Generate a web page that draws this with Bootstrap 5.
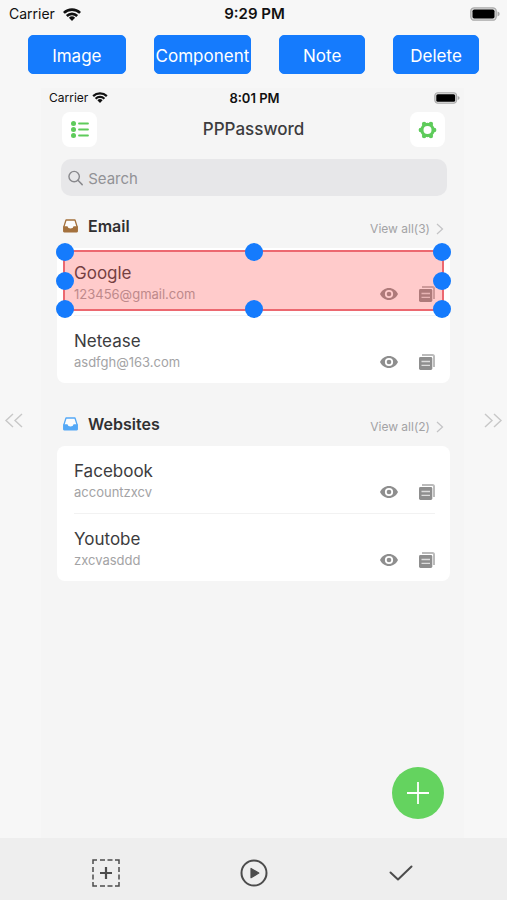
<!DOCTYPE html>
<html lang="en">
<head>
<meta charset="utf-8">
<meta name="viewport" content="width=device-width, initial-scale=1">
<title>PPPassword prototype editor</title>
<link href="https://cdn.jsdelivr.net/npm/bootstrap@5.3.0/dist/css/bootstrap.min.css" rel="stylesheet">
<style>
body { font-family: Inter, "Liberation Sans", sans-serif; background: #f7f7f7; color: #3c3c3e; line-height: 20px; font-size: 16px; }
svg { display: block; }
button { color: inherit; }
.status { height: 28px; color: #111; font-size: 14px; padding: 0 7px 0 9px; }
.status-small { height: 19px; font-size: 12px; padding: 0 4px 0 8px; }
.time { font-weight: 600; font-size: 15px; }
.status-small .time { font-size: 13px; }
.tools { gap: 28px; padding: 7px 28px 14px; }
.tool { --bs-btn-bg: #157bfd; --bs-btn-border-color: #157bfd; height: 39px; font-size: 17px; border-radius: 5px; flex: 86 1 0; }
.tool-wide { flex-grow: 98; }
.pager { width: 41px; padding: 0 0 86px; }
.pager-next { width: 43px; }
.screen { background: #f5f5f5; }
.head { padding: 5px 19px 0 21px; }
.square { width: 35px; height: 35px; border-radius: 8px; background: #fff; color: #5ecb5b; }
.app-title { font-size: 17px; font-weight: 500; }
.content { padding: 12px 14px 0 16px; }
.search { margin: 0 3px 0 4px; height: 37px; border-radius: 10px; background: #e7e7e9; padding: 0 7px; gap: 5px; }
.search input { font-size: 15px; color: #3c3c3e; }
.search input::placeholder { color: #929296; }
.section-head { height: 63px; padding: 18px 6px 0 6px; }
.section-head.first { height: 52px; padding-top: 8px; }
.section-head h2 { font-size: 16px; line-height: 20px; font-weight: 600; color: #303032; margin: 0 0 0 10px; }
.view-all { font-size: 12px; color: #a3a3a5; padding-top: 6px; gap: 6px; }
.group { border-radius: 8px; background: #fff; padding: 0 15px 0 17px; }
.entry { height: 67px; padding-top: 15px; }
.entry + .entry { border-top: 1px solid #f2f2f2; height: 68px; }
.entry-name { font-size: 17px; }
.entry-user { font-size: 13px; color: #a3a3a5; }
.entry-line { padding-top: 1px; }
.actions { gap: 21px; color: #8e8e8e; }
.selection { position: absolute; top: 2px; bottom: 4px; left: -11px; right: -9px; background: rgba(255, 75, 75, .29); border: 2px solid #ec6870; }
.handle { position: absolute; width: 18px; height: 18px; border-radius: 50%; background: #157bfd; transform: translate(-50%, -50%); }
.at-left { left: 0; } .at-center { left: 50%; } .at-right { left: 100%; }
.at-top { top: 0; } .at-middle { top: 50%; } .at-bottom { top: 100%; }
.fab { width: 52px; height: 52px; background: #64d35f; color: #fff; margin: 0 20px 19px 0; }
.dock { background: #eee; height: 62px; padding: 7px 32px 0; color: #4c4c4c; }
</style>
</head>
<body class="d-flex flex-column min-vh-100">
<svg class="d-none" aria-hidden="true">
  <symbol id="wifi" viewBox="0 0 18 13"><g fill="none" stroke="currentColor" stroke-width="2.600"><path d="M.9 4.900a11.600 11.600 0 0 1 16.200 0"/><path d="M3.800 8a7.400 7.400 0 0 1 10.400 0"/></g><path fill="currentColor" d="M5.900 9.800a4.500 4.500 0 0 1 6.200 0L9 13z"/></symbol>
  <symbol id="battery" viewBox="0 0 30 14"><rect x=".8" y=".8" width="25.400" height="12.400" rx="3.500" fill="#ddd" stroke="#aaa" stroke-width="1.300"/><rect x="2.500" y="2.500" width="22" height="9" rx="1.800" fill="#000"/><path d="M27.500 4.600q2.200.5 2.200 2.400t-2.200 2.400z" fill="#aaa"/></symbol>
  <symbol id="eye" viewBox="0 0 18 12"><path fill="currentColor" fill-rule="evenodd" d="M9 0C5 0 1.700 2.400 0 6c1.700 3.600 5 6 9 6s7.300-2.400 9-6c-1.700-3.600-5-6-9-6zm0 1.900a4.100 4.100 0 1 1 0 8.200 4.100 4.100 0 0 1 0-8.200z"/><circle cx="9" cy="6" r="2.300" fill="currentColor"/></symbol>
  <symbol id="copy" viewBox="0 0 16 16"><path d="M3 1h10.500q1.500 0 1.500 1.500V13" fill="none" stroke="currentColor" stroke-width="2" opacity=".6"/><rect y="3" width="13.300" height="13" rx="1.400" fill="currentColor"/><path d="M2.500 7.500h8.500M2.500 11.300h8.500" stroke="#fff" stroke-opacity=".7" stroke-width="1.300"/></symbol>
  <symbol id="tray" viewBox="0 0 15 14"><path d="M3 1h9l2.200 7v4.200H.8V8z" fill="#fff" fill-opacity=".7" stroke="currentColor" stroke-width="1.300" stroke-linejoin="round"/><path d="M.3 7.200h4.100q.5 2.300 3.100 2.300t3.100-2.300h4.100v5.300q0 1-1 1H1.300q-1 0-1-1z" fill="currentColor"/></symbol>
  <symbol id="chevron" viewBox="0 0 8 12"><path d="M1 1l5.500 5L1 11" fill="none" stroke="#c3c3c5" stroke-width="1.200"/></symbol>
</svg>

<header class="status d-flex align-items-center">
  <div class="col d-flex align-items-center gap-2"><span>Carrier</span><svg width="18" height="13"><use href="#wifi"/></svg></div>
  <span class="time">9:29 PM</span>
  <div class="col d-flex justify-content-end"><svg width="30" height="14"><use href="#battery"/></svg></div>
</header>

<nav class="tools d-flex" aria-label="Editor tools">
  <button type="button" class="tool tool-wide btn btn-primary px-0 pt-1 pb-0">Image</button>
  <button type="button" class="tool tool-wide btn btn-primary px-0 pt-1 pb-0">Component</button>
  <button type="button" class="tool btn btn-primary px-0 pt-1 pb-0">Note</button>
  <button type="button" class="tool btn btn-primary px-0 pt-1 pb-0">Delete</button>
</nav>

<main class="d-flex flex-grow-1">
  <button type="button" class="pager border-0 bg-transparent d-flex align-items-center ps-1" aria-label="Previous screen"><svg width="19" height="15" viewBox="0 0 19 15" fill="none" stroke="#c8c8c8" stroke-width="1.400"><path d="M9 1L2 7.500 9 14M18 1l-7 6.500 7 6.500"/></svg></button>

  <section class="screen flex-grow-1 d-flex flex-column">
    <div class="status status-small d-flex align-items-center">
      <div class="col d-flex align-items-center gap-1"><span>Carrier</span><svg width="16" height="11"><use href="#wifi"/></svg></div>
      <span class="time">8:01 PM</span>
      <div class="col d-flex justify-content-end"><svg width="26" height="12"><use href="#battery"/></svg></div>
    </div>

    <div class="head d-flex align-items-center justify-content-between">
      <button type="button" class="square border-0 p-0 d-flex align-items-center justify-content-center" aria-label="Categories"><svg width="18" height="17" viewBox="0 0 18 17" stroke="currentColor" stroke-width="1.800" stroke-linecap="round"><g fill="currentColor" stroke="none"><circle cx="2.500" cy="2.500" r="2.500"/><circle cx="2.500" cy="8.500" r="2.500"/><circle cx="2.500" cy="14.500" r="2.500"/></g><path d="M8 2.500h9M8 8.500h9M8 14.500h9"/></svg></button>
      <h1 class="app-title m-0">PPPassword</h1>
      <button type="button" class="square border-0 p-0 d-flex align-items-center justify-content-center" aria-label="Settings"><svg width="19" height="18" viewBox="0 0 19 18"><g fill="currentColor"><circle cx="9.500" cy="9" r="7.200"/><circle cx="2.800" cy="9" r="2.200"/><circle cx="16.200" cy="9" r="2.200"/><circle cx="6.100" cy="3" r="2.200"/><circle cx="12.900" cy="3" r="2.200"/><circle cx="6.100" cy="15" r="2.200"/><circle cx="12.900" cy="15" r="2.200"/></g><circle cx="9.500" cy="9" r="4" fill="#fff"/></svg></button>
    </div>

    <div class="content">
      <label class="search d-flex align-items-center">
        <svg width="16" height="16" viewBox="0 0 16 16" fill="none" stroke="#88888c" stroke-width="1.500" stroke-linecap="round"><circle cx="6.500" cy="6.500" r="5.500"/><path d="M10.500 10.500l4.500 4.500"/></svg>
        <input type="search" class="form-control border-0 bg-transparent shadow-none px-0 pb-0 pt-1" placeholder="Search" aria-label="Search">
      </label>

      <div class="section-head first d-flex align-items-center">
        <svg width="15" height="14" color="#a4713d"><use href="#tray"/></svg>
        <h2 class="flex-grow-1">Email</h2>
        <a href="#" class="view-all d-flex align-items-center text-decoration-none">View all(3)<svg width="8" height="12"><use href="#chevron"/></svg></a>
      </div>
      <div class="group">
        <div class="entry position-relative">
          <div class="entry-name">Google</div>
          <div class="entry-line d-flex align-items-center"><span class="entry-user flex-grow-1">123456@gmail.com</span>
            <div class="actions d-flex"><button type="button" class="border-0 bg-transparent p-0" aria-label="Show Google password"><svg width="18" height="12"><use href="#eye"/></svg></button><button type="button" class="border-0 bg-transparent p-0" aria-label="Copy Google password"><svg width="16" height="16"><use href="#copy"/></svg></button></div>
          </div>
          <div class="selection">
            <i class="handle at-left at-top"></i><i class="handle at-center at-top"></i><i class="handle at-right at-top"></i>
            <i class="handle at-left at-middle"></i><i class="handle at-right at-middle"></i>
            <i class="handle at-left at-bottom"></i><i class="handle at-center at-bottom"></i><i class="handle at-right at-bottom"></i>
          </div>
        </div>
        <div class="entry">
          <div class="entry-name">Netease</div>
          <div class="entry-line d-flex align-items-center"><span class="entry-user flex-grow-1">asdfgh@163.com</span>
            <div class="actions d-flex"><button type="button" class="border-0 bg-transparent p-0" aria-label="Show Netease password"><svg width="18" height="12"><use href="#eye"/></svg></button><button type="button" class="border-0 bg-transparent p-0" aria-label="Copy Netease password"><svg width="16" height="16"><use href="#copy"/></svg></button></div>
          </div>
        </div>
      </div>

      <div class="section-head d-flex align-items-center">
        <svg width="15" height="14" color="#54a8f6"><use href="#tray"/></svg>
        <h2 class="flex-grow-1">Websites</h2>
        <a href="#" class="view-all d-flex align-items-center text-decoration-none">View all(2)<svg width="8" height="12"><use href="#chevron"/></svg></a>
      </div>
      <div class="group">
        <div class="entry">
          <div class="entry-name">Facebook</div>
          <div class="entry-line d-flex align-items-center"><span class="entry-user flex-grow-1">accountzxcv</span>
            <div class="actions d-flex"><button type="button" class="border-0 bg-transparent p-0" aria-label="Show Facebook password"><svg width="18" height="12"><use href="#eye"/></svg></button><button type="button" class="border-0 bg-transparent p-0" aria-label="Copy Facebook password"><svg width="16" height="16"><use href="#copy"/></svg></button></div>
          </div>
        </div>
        <div class="entry">
          <div class="entry-name">Youtobe</div>
          <div class="entry-line d-flex align-items-center"><span class="entry-user flex-grow-1">zxcvasddd</span>
            <div class="actions d-flex"><button type="button" class="border-0 bg-transparent p-0" aria-label="Show Youtobe password"><svg width="18" height="12"><use href="#eye"/></svg></button><button type="button" class="border-0 bg-transparent p-0" aria-label="Copy Youtobe password"><svg width="16" height="16"><use href="#copy"/></svg></button></div>
          </div>
        </div>
      </div>
    </div>

    <button type="button" class="fab rounded-circle border-0 p-0 mt-auto align-self-end d-flex align-items-center justify-content-center" aria-label="Add password"><svg width="24" height="24" viewBox="0 0 24 24" stroke="currentColor" stroke-width="1.800"><path d="M12 1v22M1 12h22"/></svg></button>
  </section>

  <button type="button" class="pager pager-next border-0 bg-transparent d-flex align-items-center justify-content-end pe-1" aria-label="Next screen"><svg width="19" height="15" viewBox="0 0 19 15" fill="none" stroke="#c8c8c8" stroke-width="1.400"><path d="M1 1l7 6.500L1 14M10 1l7 6.500-7 6.500"/></svg></button>
</main>

<footer class="dock d-flex">
  <button type="button" class="col border-0 bg-transparent p-0 d-flex align-items-center justify-content-center" aria-label="Add area"><svg width="28" height="28" viewBox="0 0 28 28" fill="none" stroke="currentColor"><path d="M1 5V1h4M23 1h4v4M27 23v4h-4M5 27H1v-4M8 1h5M15.500 1h5M8 27h5M15.500 27h5M1 8v5M1 15.500v5M27 8v5M27 15.500v5" stroke-width="1.500"/><path d="M14 8v12M8 14h12" stroke-width="2.200"/></svg></button>
  <button type="button" class="col border-0 bg-transparent p-0 d-flex align-items-center justify-content-center" aria-label="Play"><svg width="28" height="28" viewBox="0 0 28 28"><circle cx="14" cy="14" r="12.500" fill="none" stroke="currentColor" stroke-width="2"/><path d="M11 9.500v9.200l7.800-4.600z" fill="currentColor" stroke="currentColor" stroke-width="1.200" stroke-linejoin="round"/></svg></button>
  <button type="button" class="col border-0 bg-transparent p-0 d-flex align-items-center justify-content-center" aria-label="Done"><svg width="24" height="16" viewBox="0 0 24 16" fill="none" stroke="currentColor" stroke-width="2" stroke-linecap="round" stroke-linejoin="round"><path d="M1.500 7.500L9 14.500 22.500 1.500"/></svg></button>
</footer>
<script src="https://cdn.jsdelivr.net/npm/bootstrap@5.3.0/dist/js/bootstrap.bundle.min.js"></script>
</body>
</html>
